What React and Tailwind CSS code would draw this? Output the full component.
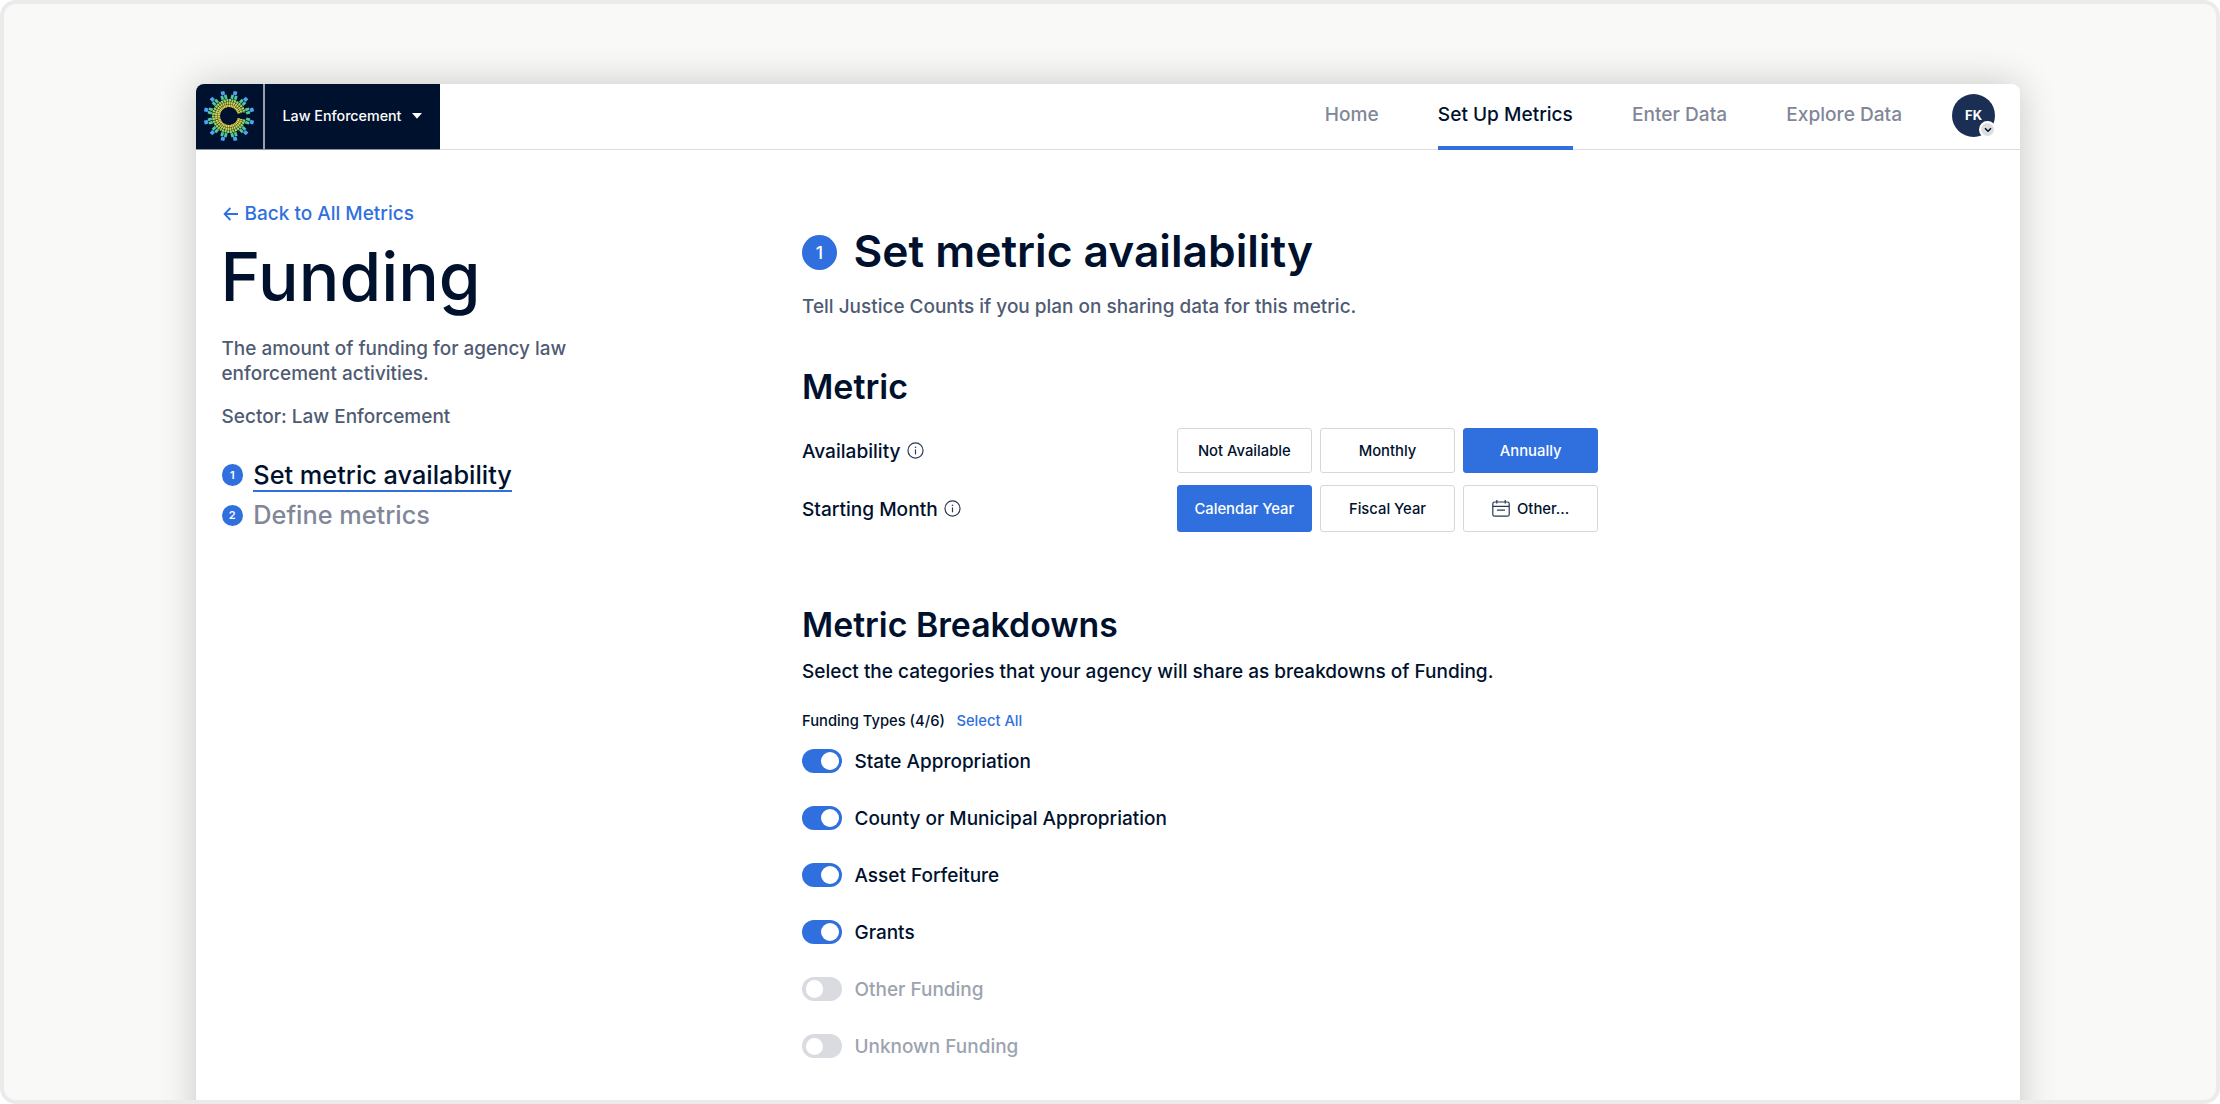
import React from "react";

const NAV = ["Home", "Set Up Metrics", "Enter Data", "Explore Data"];

const FUNDING_TYPES = [
  ["State Appropriation", true],
  ["County or Municipal Appropriation", true],
  ["Asset Forfeiture", true],
  ["Grants", true],
  ["Other Funding", false],
  ["Unknown Funding", false],
];

const SPOKES = [15, 45, 75, 105, 135, 165, 195, 225, 255, 285, 315, 345];

function arc(r) {
  const a = (13 * Math.PI) / 180;
  const x = 26 + r * Math.cos(a);
  const dy = r * Math.sin(a);
  return `M${x} ${26 + dy}A${r} ${r} 0 1 1 ${x} ${26 - dy}`;
}

function Logo() {
  return (
    <svg viewBox="0 0 52 52" className="size-[52px]" fill="none">
      <path d={arc(10.2)} stroke="#ead94b" strokeWidth="2.6" pathLength="334" strokeDasharray="7.7 1.8" />
      <path d={arc(12.9)} stroke="#d0d84d" strokeWidth="2.4" pathLength="334" strokeDasharray="7.7 1.8" />
      <path d={arc(15.7)} stroke="#9bd45a" strokeWidth="2.7" pathLength="334" strokeDasharray="7.7 1.8" />
      {SPOKES.map((a) => (
        <g key={a} transform={`rotate(${a} 26 26)`}>
          <rect x="43.3" y="22.8" width="4" height="2.8" fill="#55c79c" />
          <rect x="43.3" y="26.4" width="4" height="2.8" fill="#55c79c" />
          <rect x="47.7" y="24.1" width="3.8" height="3.8" fill="#4aa5f5" />
        </g>
      ))}
    </svg>
  );
}

function InfoIcon() {
  return (
    <svg viewBox="0 0 16 16" className="size-[17px]" fill="none" stroke="#2a3750" strokeWidth="1.1">
      <circle cx="8" cy="8" r="7.1" />
      <path d="M8 7v4.6" />
      <circle cx="8" cy="4.9" r="0.75" fill="#2a3750" stroke="none" />
    </svg>
  );
}

function CalendarIcon() {
  return (
    <svg viewBox="0 0 18 17" className="h-[17px] w-[18px]" fill="none" stroke="#2a3750" strokeWidth="1.2">
      <rect x="0.8" y="2" width="16.4" height="14.2" rx="1.8" />
      <path d="M0.8 6.3h16.4M4.8 0v3.6M13.2 0v3.6M5 10.2h8" />
    </svg>
  );
}

function OptionButton({ label, active, icon }) {
  return (
    <button
      className={
        "flex items-center justify-center gap-[7px] rounded-[3px] border text-[14.8px] font-medium " +
        (active ? "border-[#3070de] bg-[#3070de] text-white" : "border-[#d4d7dd] bg-white text-[#00112e]")
      }
    >
      {icon}
      {label}
    </button>
  );
}

function SettingRow({ label, className, children }) {
  return (
    <div className={"flex w-[796px] items-stretch justify-between " + className}>
      <div className="flex items-center gap-[6.5px] text-[19.1px] font-medium">
        <span className="pt-[2px]">{label}</span>
        <InfoIcon />
      </div>
      <div className="grid w-[421px] grid-cols-3 gap-[8.5px]">{children}</div>
    </div>
  );
}

function Toggle({ on }) {
  return (
    <span
      className={
        "flex h-6 w-10 items-center rounded-full px-[3.5px] " +
        (on ? "justify-end bg-[#3070de]" : "justify-start bg-[#d9dbe0]")
      }
    >
      <span className="size-[17.5px] rounded-full bg-white" />
    </span>
  );
}

function Step({ n, label, active }) {
  return (
    <li className="flex h-[40.4px] items-start gap-[10.3px]">
      <span className="mt-[4.2px] flex size-[21.5px] items-center justify-center rounded-full bg-[#3070de] text-[11px] font-semibold text-white">
        {n}
      </span>
      <span
        className={
          "border-b-2 pt-px pb-px text-[25.3px] leading-[28px] font-medium " +
          (active ? "border-[#3070de] text-[#00112e]" : "border-transparent text-[#808798]")
        }
      >
        {label}
      </span>
    </li>
  );
}

function Header() {
  return (
    <header className="flex h-[66px] border-b border-[#dcdddf]">
      <div className="-mb-px flex h-[66px] rounded-tl-[8px] border-b border-[#8b919f] bg-[#00112e] text-white">
        <div className="flex w-[69px] items-center justify-center border-r-2 border-[#9a9fab] pr-px pb-[2px]">
          <Logo />
        </div>
        <div className="flex w-[175px] items-center justify-between pr-[18px] pb-[2px] pl-[17.5px]">
          <span className="text-[14.27px] font-medium">Law Enforcement</span>
          <svg viewBox="0 0 10 6" className="h-[6px] w-[10px]" fill="#fff">
            <path d="M0 0h10L5 5.8z" />
          </svg>
        </div>
      </div>
      <nav className="ml-auto flex gap-[59.2px]">
        {NAV.map((item) => (
          <a
            key={item}
            className={
              "-mb-px h-[66px] border-b-4 pt-[18px] text-[19.1px] leading-[24px] font-medium " +
              (item === "Set Up Metrics" ? "border-[#3070de] text-[#00112e]" : "border-transparent text-[#808798]")
            }
          >
            {item}
          </a>
        ))}
      </nav>
      <div className="relative mt-[10px] mr-[25px] ml-[50px] flex size-[43px] items-center justify-center rounded-full bg-[#1b2f55] text-[13px] font-bold text-white">
        FK
        <span className="absolute -right-px -bottom-px flex size-[17px] items-center justify-center rounded-full border-2 border-white bg-[#dcdddf]">
          <svg viewBox="0 0 8 6" className="h-[6px] w-[8px]" fill="none" stroke="#00112e" strokeWidth="1.6">
            <path d="M1 1.2l3 3 3-3" />
          </svg>
        </span>
      </div>
    </header>
  );
}

function Sidebar() {
  return (
    <aside className="w-[580.5px] shrink-0 pt-[52px] font-medium">
      <a className="flex items-center gap-[6px] text-[19px] leading-[24px] text-[#3070de]">
        <svg viewBox="0 0 16 14" className="ml-[1px] h-[14px] w-[16px]" fill="none" stroke="currentColor" strokeWidth="1.8">
          <path d="M15 7H2M7.4 1L1.6 7l5.8 6" />
        </svg>
        Back to All Metrics
      </a>
      <h1 className="mt-[17.4px] -ml-[1px] text-[67.6px] leading-[68px]">Funding</h1>
      <p className="mt-[24.4px] w-[360px] text-[18.95px] leading-[25.6px] text-[#4f5b72]">
        The amount of funding for agency law enforcement activities.
      </p>
      <p className="mt-[17.6px] text-[19px] leading-[24px] text-[#4f5b72]">Sector: Law Enforcement</p>
      <ol className="mt-[31.5px]">
        <Step n="1" label="Set metric availability" active />
        <Step n="2" label="Define metrics" />
      </ol>
    </aside>
  );
}

function MetricSettings() {
  return (
    <main className="pt-[75px] font-medium">
      <h2 className="flex items-start gap-[16.5px] text-[44.3px] leading-[52px] font-semibold">
        <span className="mt-[10.1px] flex size-[35px] items-center justify-center rounded-full bg-[#3070de] text-[17.5px] leading-none font-medium text-white">
          1
        </span>
        Set metric availability
      </h2>
      <p className="mt-[17.5px] text-[18.98px] leading-[24px] text-[#4f5b72]">
        Tell Justice Counts if you plan on sharing data for this metric.
      </p>
      <h3 className="mt-[47px] text-[34px] leading-[42px] font-semibold">Metric</h3>
      <SettingRow label="Availability" className="mt-[20.9px] h-[44.5px]">
        <OptionButton label="Not Available" />
        <OptionButton label="Monthly" />
        <OptionButton label="Annually" active />
      </SettingRow>
      <SettingRow label="Starting Month" className="mt-[12.5px] h-[46.7px]">
        <OptionButton label="Calendar Year" active />
        <OptionButton label="Fiscal Year" />
        <OptionButton label="Other..." icon={<CalendarIcon />} />
      </SettingRow>
      <h3 className="mt-[72.2px] text-[33.8px] leading-[42px] font-semibold">Metric Breakdowns</h3>
      <p className="mt-[14px] text-[19px] leading-[24px]">
        Select the categories that your agency will share as breakdowns of Funding.
      </p>
      <div className="mt-[26.7px] flex gap-[11.5px] text-[14.75px] leading-[20px]">
        <span>Funding Types (4/6)</span>
        <a className="text-[#3070de]">Select All</a>
      </div>
      <ul className="mt-[18.1px] flex flex-col gap-[33.05px]">
        {FUNDING_TYPES.map(([label, on]) => (
          <li key={label} className="flex h-6 items-center gap-[12.5px] text-[18.98px]">
            <Toggle on={on} />
            <span className={on ? "pt-[2px] text-[#00112e]" : "pt-[2px] text-[#9ca3b0]"}>{label}</span>
          </li>
        ))}
      </ul>
    </main>
  );
}

export default function App() {
  return (
    <div className="h-[1104px] w-[2220px] overflow-hidden rounded-[16px] border-4 border-[#ebebeb] bg-[#f9f9f7] pt-[80px] pl-[192px] font-[Inter,sans-serif] text-[#00112e]">
      <div className="h-[1100px] w-[1824px] rounded-[8px] bg-white shadow-[0_0_38px_rgba(0,0,0,0.2)]">
        <Header />
        <div className="flex pl-[25.5px]">
          <Sidebar />
          <MetricSettings />
        </div>
      </div>
    </div>
  );
}
